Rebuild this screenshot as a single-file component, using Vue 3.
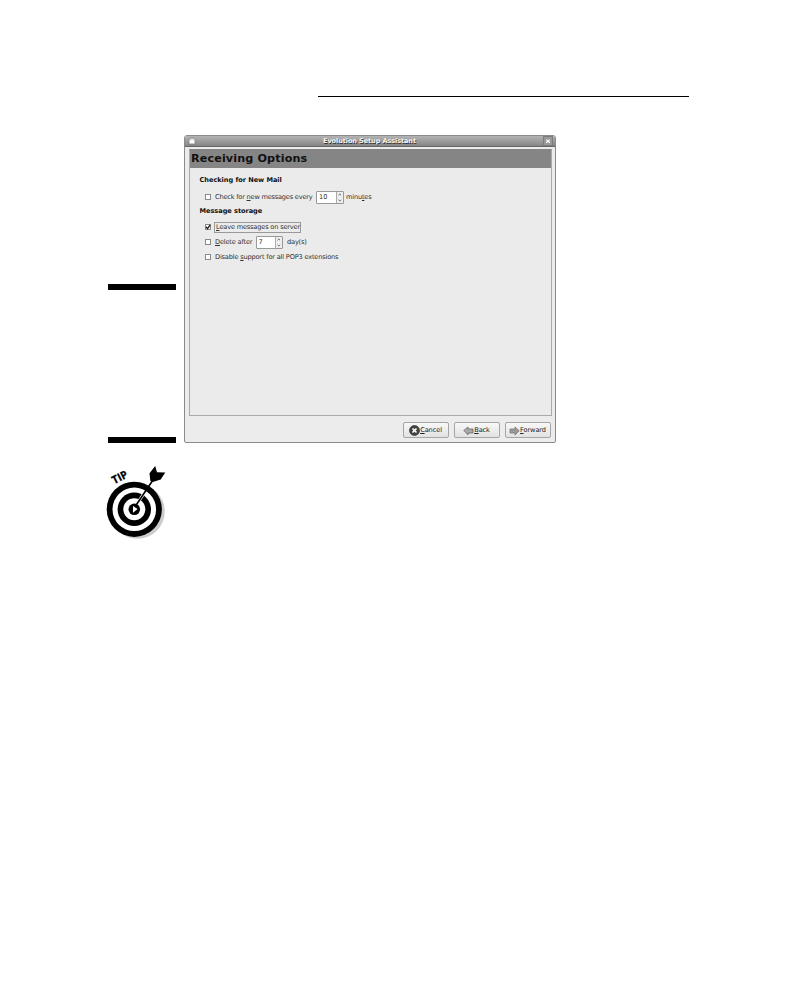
<script setup>
import { ref } from 'vue'

const checkMail = ref(false)
const leave = ref(true)
const removeAfter = ref(false)
const disablePop = ref(false)
</script>

<template>
  <main class="page">
    <div class="rule"></div>
    <section class="figure">
      <aside class="caption"></aside>
      <div class="window">
        <header class="titlebar">
          <svg class="app-icon" viewBox="0 0 8 8"><path d="M1 3L3 1.2H6L7 3V7H1Z" fill="#e4e4e4" stroke="#777" stroke-width=".5" /><path d="M2 3.5H6V6H2Z" fill="#fff" /></svg>
          <span class="title">Evolution Setup Assistant</span>
          <svg class="close" viewBox="0 0 10 10"><rect x=".5" y=".5" width="9" height="9" fill="#999" stroke="#7c7c7c" /><path d="M3.2 3.6L6.8 6.8M6.8 3.6L3.2 6.8" stroke="#fff" stroke-width="1.2" /></svg>
        </header>
        <div class="panel">
          <h1><span>Receiving Options</span></h1>
          <h2 class="mail"><span>Checking for New Mail</span></h2>
          <div class="row first">
            <i class="box" @click="checkMail = !checkMail"></i>
            <span class="label every">Check for <u>n</u>ew messages every</span>
            <span class="spin ten"><b>10</b><svg viewBox="0 0 7 11"><path d="M.5 0V11" stroke="#aaa" /><path d="M2.5 3.2L3.8 2 5 3.2M2.5 7.8L3.8 9 5 7.8" fill="none" stroke="#555" stroke-width=".9" /></svg></span>
            <span class="label minutes">minu<u>t</u>es</span>
          </div>
          <h2 class="storage"><span>Message storage</span></h2>
          <div class="row">
            <i class="box" @click="leave = !leave"><svg v-if="leave" viewBox="0 0 6 6"><path d="M1 2.8L2.5 4.6 5.2 .8" fill="none" stroke="#222" stroke-width="1.4" /></svg></i>
            <span class="label focus"><u>L</u>eave messages on server</span>
          </div>
          <div class="row">
            <i class="box" @click="removeAfter = !removeAfter"></i>
            <span class="label delete"><u>D</u>elete after</span>
            <span class="spin seven"><b>7</b><svg viewBox="0 0 7 11"><path d="M.5 0V11" stroke="#aaa" /><path d="M2.5 3.2L3.8 2 5 3.2M2.5 7.8L3.8 9 5 7.8" fill="none" stroke="#555" stroke-width=".9" /></svg></span>
            <span class="label days">day(s)</span>
          </div>
          <div class="row">
            <i class="box" @click="disablePop = !disablePop"></i>
            <span class="label pop">Disable <u>s</u>upport for all POP3 extensions</span>
          </div>
        </div>
        <footer class="actions">
          <button class="cancel"><svg viewBox="0 0 11 11"><circle cx="5.5" cy="5.5" r="5" fill="#444" stroke="#222" stroke-width=".6" /><path d="M3.5 3.5L7.5 7.5M7.5 3.5L3.5 7.5" stroke="#fff" stroke-width="1.7" /></svg><span><u>C</u>ancel</span></button>
          <button class="back"><svg viewBox="0 0 11 11"><path d="M.8 5.5L5 2V4H10V8H5V9.8Z" fill="#aaa" stroke="#666" stroke-width=".8" /></svg><span><u>B</u>ack</span></button>
          <button class="forward"><svg viewBox="0 0 11 11"><path d="M10.2 5.8L6 2V4H1V8H6V10Z" fill="#999" stroke="#777" stroke-width=".8" /></svg><span><u>F</u>orward</span></button>
        </footer>
      </div>
    </section>
    <svg class="tip" viewBox="0 0 75 85">
      <circle cx="37.5" cy="51.5" r="27.3" fill="#ccc" />
      <circle cx="34.3" cy="49.3" r="27.6" />
      <circle cx="34.3" cy="49.3" r="21.8" fill="#fff" />
      <circle cx="34.3" cy="49.3" r="16.7" />
      <circle cx="34.3" cy="49.3" r="11" fill="#fff" />
      <circle cx="34.3" cy="49.3" r="5.8" />
      <path d="M33 46L37.6 49 33 52.8Z" fill="#fff" />
      <path d="M39.5 40L44 33.3" stroke="#fff" stroke-width="3" />
      <path d="M35.5 46L54 18.5" stroke="#000" stroke-width="1.6" />
      <path d="M50.3 20.8L49.5 13.3 55.2 6 57 12.3 65.3 12.5 60.7 19.5 52.8 22Z" />
      <text x="14.3" y="24.3" transform="rotate(-27 14.3 24.3)" textLength="16" lengthAdjust="spacingAndGlyphs">TIP</text>
    </svg>
  </main>
</template>

<style>
body { margin: 0; background: #fff; }
</style>

<style scoped>
* { box-sizing: border-box; }
.page { width: 797px; height: 999px; padding-top: 96px; background: #fff; font-family: "DejaVu Sans", sans-serif; color: #303030; overflow: hidden; }
.rule { width: 371px; height: 1px; margin-left: 318px; background: #000; }
.figure { display: flex; gap: 8px; margin: 38px 0 0 108px; height: 308px; }
.caption { width: 68px; height: 159px; margin-top: 149px; border: solid #000; border-width: 6px 0; }
.window { width: 372px; height: 308px; border: 1px solid #8b8b8b; border-radius: 3px 3px 2px 2px; background: #ececec; overflow: hidden; }
.titlebar { display: flex; align-items: center; justify-content: space-between; height: 11px; padding: 0 2px 0 3px; background: linear-gradient(#b4b4b4, #858585); border-bottom: 1px solid #666; }
.app-icon { width: 8px; height: 8px; }
.close { width: 10px; height: 10px; }
.title { font-size: 6.6px; letter-spacing: -.12px; font-weight: bold; line-height: 10px; color: #f4f4f4; text-shadow: .7px .7px 0 #333; white-space: nowrap; }
.panel { width: 363px; height: 267px; margin: 2px 0 0 4px; border: 1px solid #aaa; border-top-color: #858585; background: #ebebeb; }
h1, h2 { margin: 0; white-space: nowrap; }
h1 { height: 18px; padding-left: 1px; background: #858585; font-size: 11.2px; letter-spacing: .12px; line-height: 17px; color: #111; }
h2 { padding-left: 9.5px; height: 11px; font-size: 6.6px; letter-spacing: -.04px; line-height: 11px; color: #111; }
.mail { margin-top: 7px; }
.storage { margin-top: 2px; margin-bottom: 3px; }
.row { display: flex; align-items: center; height: 15px; padding-left: 15px; font-size: 6.6px; }
.first { height: 14px; margin-top: 4px; }
.box { display: block; width: 6px; height: 6px; margin: 0 4px 1px 0; border: 1px solid #8a8a8a; background: #fff; flex: none; }
.box svg { display: block; width: 6px; height: 6px; margin: -1px; }
.label { display: block; white-space: nowrap; line-height: 9px; letter-spacing: -.17px; flex: none; }
u { text-decoration-thickness: 1px; text-underline-offset: 1px; }
.every { width: 101px; letter-spacing: -.2px; }
.delete { width: 40.5px; }
.focus { height: 11px; margin-left: -1px; padding: 0 0 0 1px; width: 87px; border: 1px solid #999; }
.spin { display: flex; height: 13px; border: 1px solid #999; border-radius: 1px; background: #fff; flex: none; }
.spin b { flex: 1; padding-left: 2px; font-weight: normal; line-height: 11px; }
.spin svg { width: 7px; height: 11px; background: #eee; }
.ten { width: 28px; margin-right: 2px; }
.seven { width: 27px; margin-right: 4.5px; }
.actions { display: flex; gap: 5px; margin: 6px 0 0 218px; }
button { display: flex; align-items: center; justify-content: center; width: 46px; height: 16px; padding: 0; border: 1px solid #a5a5a5; border-radius: 2px; background: linear-gradient(#f8f8f8, #e2e2e2); font: 6.6px "DejaVu Sans", sans-serif; letter-spacing: -.1px; color: #222; white-space: nowrap; }
button svg { width: 11px; height: 11px; flex: none; margin-left: -1px; }
.tip { display: block; width: 75px; height: 85px; margin: 17px 0 0 100px; }
.tip text { font: bold 11px "Open Sans", sans-serif; stroke: #000; stroke-width: .3px; }
</style>
